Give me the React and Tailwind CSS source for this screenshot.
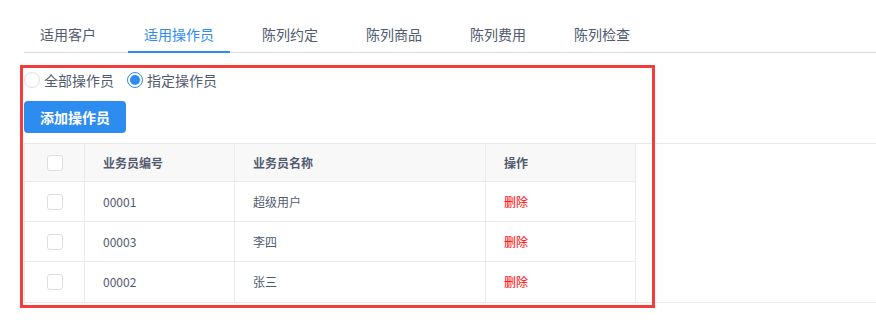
import { useState } from "react";

const tabs = ["适用客户", "适用操作员", "陈列约定", "陈列商品", "陈列费用", "陈列检查"];

const rows = [
  { code: "00001", name: "超级用户" },
  { code: "00003", name: "李四" },
  { code: "00002", name: "张三" },
];

function Checkbox() {
  return <span className="block w-4 h-4 rounded-[3px] border border-[#dcdee2] bg-white" />;
}

function Radio({ checked, label, onClick }) {
  return (
    <label onClick={onClick} className="flex items-center gap-1 cursor-pointer">
      {checked ? (
        <span className="w-4 h-4 rounded-full border border-[#2d8cf0] flex items-center justify-center">
          <span className="w-2.5 h-2.5 rounded-full bg-[#2d8cf0]" />
        </span>
      ) : (
        <span className="w-4 h-4 rounded-full border border-[#dcdee2] bg-white" />
      )}
      <span className="text-sm text-[#515a6e]">{label}</span>
    </label>
  );
}

export default function App() {
  const [tab, setTab] = useState(1);
  const [mode, setMode] = useState("some");

  return (
    <div className="relative w-[876px] h-[328px] bg-white overflow-hidden font-['Noto_Sans_CJK_SC',sans-serif]">
      {/* tabs */}
      <div className="ml-6 mt-4 flex gap-4 border-b border-[#dcdee2] h-[37px]">
        {tabs.map((t, i) => (
          <div
            key={t}
            onClick={() => setTab(i)}
            className={`relative px-4 flex items-center text-sm cursor-pointer ${
              tab === i ? "text-[#2d8cf0]" : "text-[#515a6e]"
            }`}
          >
            {t}
            {tab === i && <span className="absolute left-0 right-0 -bottom-px h-0.5 bg-[#2d8cf0]" />}
          </div>
        ))}
      </div>

      <div className="pl-6">
        <div className="flex items-center gap-[13px] h-5 mt-[17px]">
          <Radio checked={mode === "all"} label="全部操作员" onClick={() => setMode("all")} />
          <Radio checked={mode === "some"} label="指定操作员" onClick={() => setMode("some")} />
        </div>

        <button className="mt-[11px] h-8 px-4 rounded bg-[#2d8cf0] text-white text-sm font-bold">
          添加操作员
        </button>

        {/* table */}
        <div className="mt-2.5 border-t border-b border-l border-[#e8eaec]">
          <div className="flex">
            <div className="w-[611px]">
              <div className="flex h-[38px] bg-[#f8f8f9] text-xs font-bold text-[#515a6e] border-b border-[#e8eaec]">
                <div className="w-[60px] flex items-center justify-center border-r border-[#e8eaec]"><Checkbox /></div>
                <div className="w-[150px] flex items-center pl-[18px] border-r border-[#e8eaec]">业务员编号</div>
                <div className="w-[251px] flex items-center pl-[18px] border-r border-[#e8eaec]">业务员名称</div>
                <div className="w-[150px] flex items-center pl-[18px] border-r border-[#e8eaec]">操作</div>
              </div>
              {rows.map((r, i) => (
                <div
                  key={r.code}
                  className={`flex h-10 text-xs text-[#515a6e] ${i < rows.length - 1 ? "border-b border-[#e8eaec]" : ""}`}
                >
                  <div className="w-[60px] flex items-center justify-center border-r border-[#e8eaec]"><Checkbox /></div>
                  <div className="w-[150px] flex items-center pl-[18px] border-r border-[#e8eaec]">{r.code}</div>
                  <div className="w-[251px] flex items-center pl-[18px] border-r border-[#e8eaec]">{r.name}</div>
                  <div className="w-[150px] flex items-center pl-[18px] border-r border-[#e8eaec] text-[#ff0000] cursor-pointer">删除</div>
                </div>
              ))}
            </div>
            <div className="flex-1" />
          </div>
        </div>
      </div>

      {/* annotation box */}
      <div className="absolute left-5 top-[65px] w-[635px] h-[243px] border-[3px] border-[#f53b3b] pointer-events-none" />
    </div>
  );
}
